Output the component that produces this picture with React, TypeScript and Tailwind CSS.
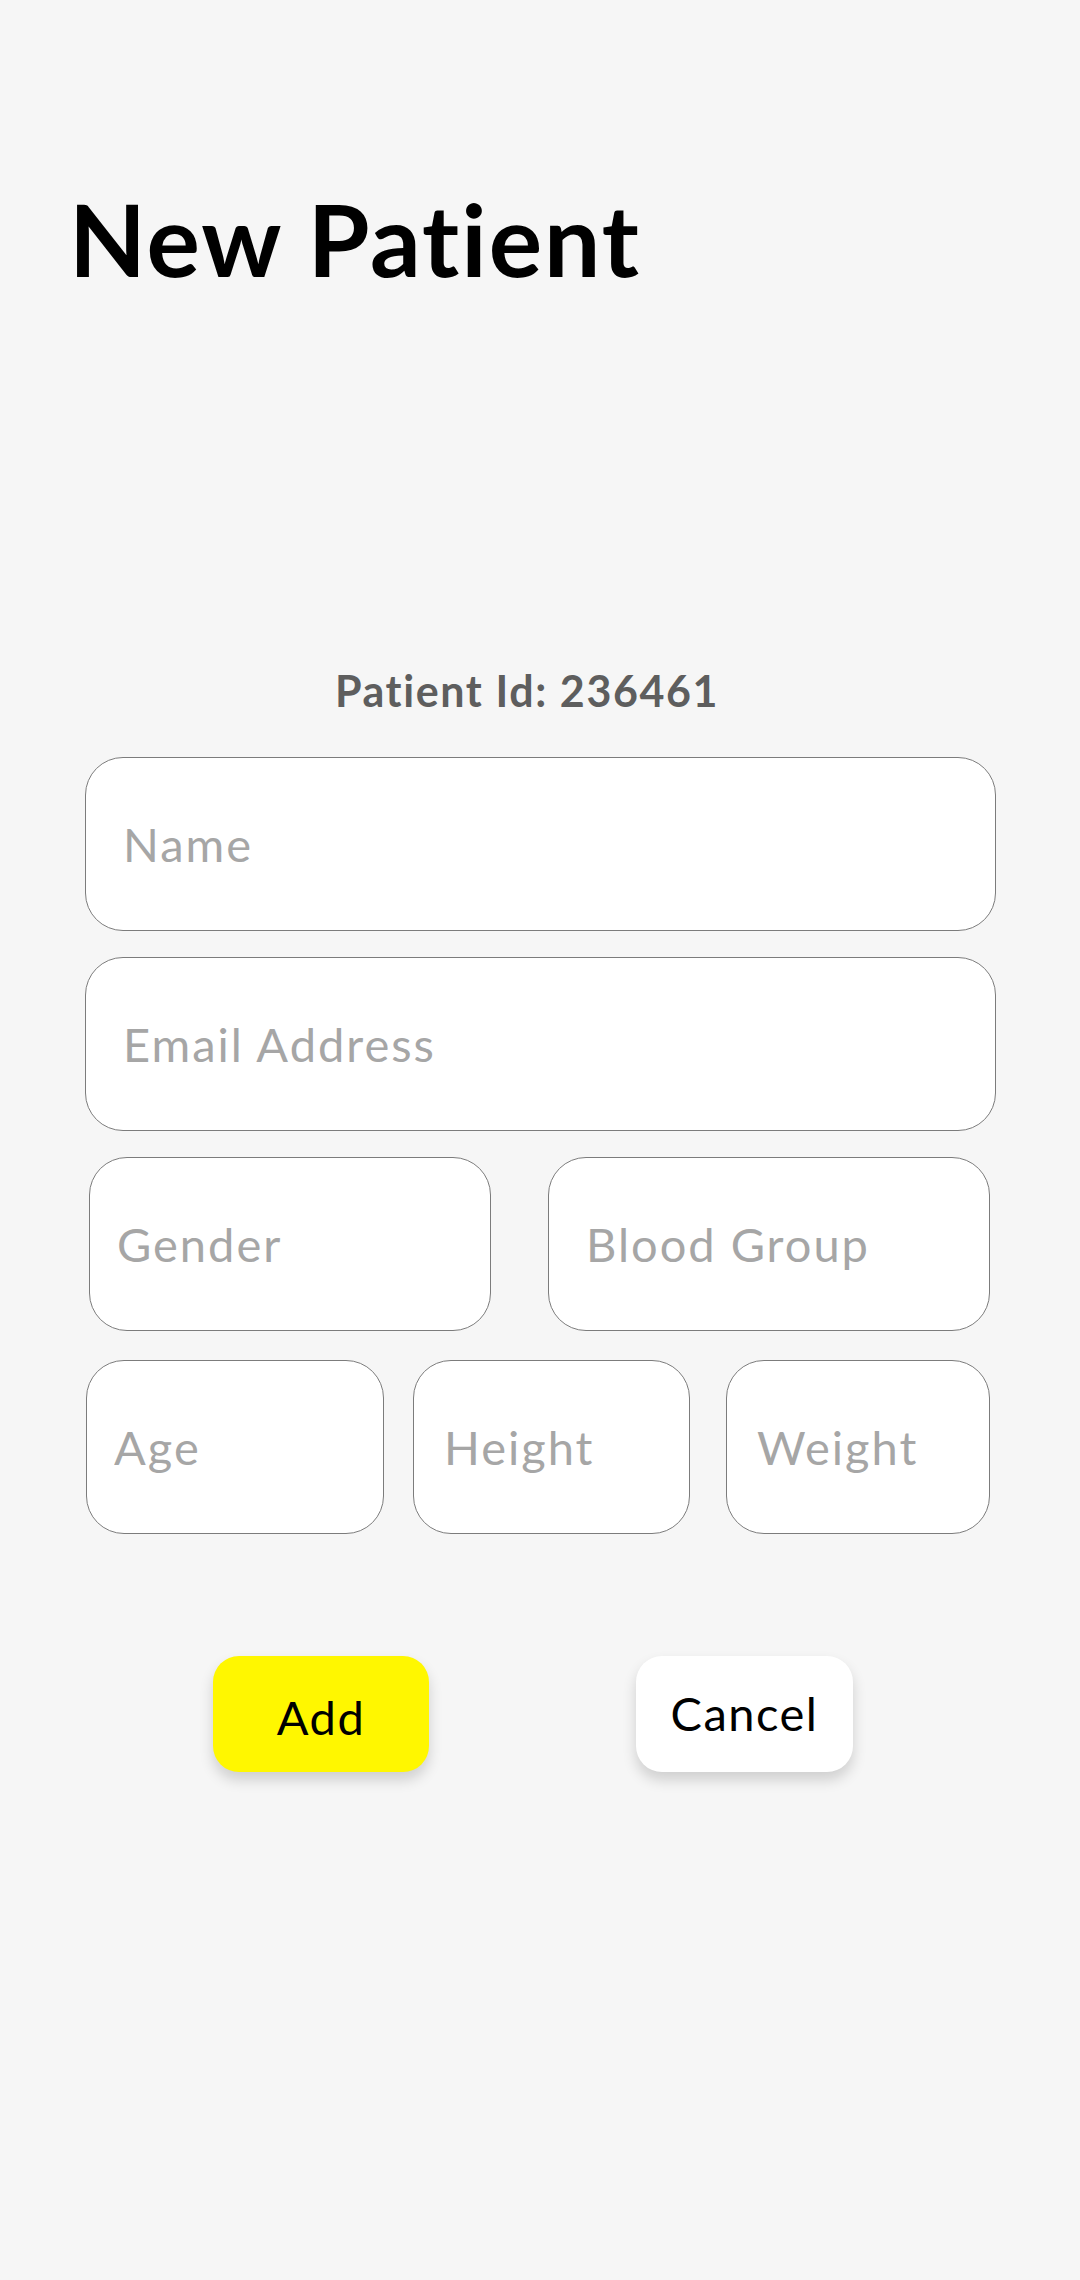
import React from "react";

const inputBase =
  "block h-[174px] rounded-[38px] border border-[#7c7c7c] bg-white text-[47px] tracking-[2px] text-black placeholder:text-[#a6a6a6] outline-none font-['Lato',sans-serif] [font-variant-ligatures:none]";

export default function App() {
  return (
    <div className="min-h-[2280px] w-[1080px] bg-[#f6f6f6] font-['Lato',sans-serif] [font-variant-ligatures:none]">
      <div className="pt-[178px] pl-[69px]">
        <h1 className="text-[100px] font-bold leading-[1.2] tracking-[2px] text-black">New Patient</h1>
      </div>

      <div className="mt-[367px] px-[85px]">
        <div className="flex justify-center pr-[26px]">
          <span className="text-[43px] font-bold leading-[1.2] tracking-[1.6px] text-[#5e5e5e]">Patient Id: 236461</span>
        </div>

        <div className="mt-[40px] flex flex-col">
          <input className={`${inputBase} w-[911px] pl-[37px]`} placeholder="Name" />
          <input className={`${inputBase} mt-[26px] w-[911px] pl-[37px]`} placeholder="Email Address" />

          <div className="mt-[26px] flex">
            <input className={`${inputBase} ml-[4px] w-[402px] pl-[27px]`} placeholder="Gender" />
            <input className={`${inputBase} ml-[57px] w-[442px] pl-[37px]`} placeholder="Blood Group" />
          </div>

          <div className="mt-[29px] flex">
            <input className={`${inputBase} ml-[1px] w-[298px] pl-[27px]`} placeholder="Age" />
            <input className={`${inputBase} ml-[29px] w-[277px] pl-[30px]`} placeholder="Height" />
            <input className={`${inputBase} ml-[36px] w-[264px] pl-[30px]`} placeholder="Weight" />
          </div>
        </div>

        <div className="mt-[122px] flex">
          <button className="ml-[128px] flex h-[116px] w-[216px] items-center justify-center rounded-[26px] bg-[#fff700] pt-[8px] text-[47px] tracking-[1.5px] text-black shadow-[0_8px_14px_rgba(0,0,0,0.16)]">
            Add
          </button>
          <button className="ml-[207px] flex h-[116px] w-[217px] items-center justify-center rounded-[26px] bg-white text-[47px] tracking-[1.5px] text-black shadow-[0_8px_14px_rgba(0,0,0,0.16)]">
            Cancel
          </button>
        </div>
      </div>
    </div>
  );
}
